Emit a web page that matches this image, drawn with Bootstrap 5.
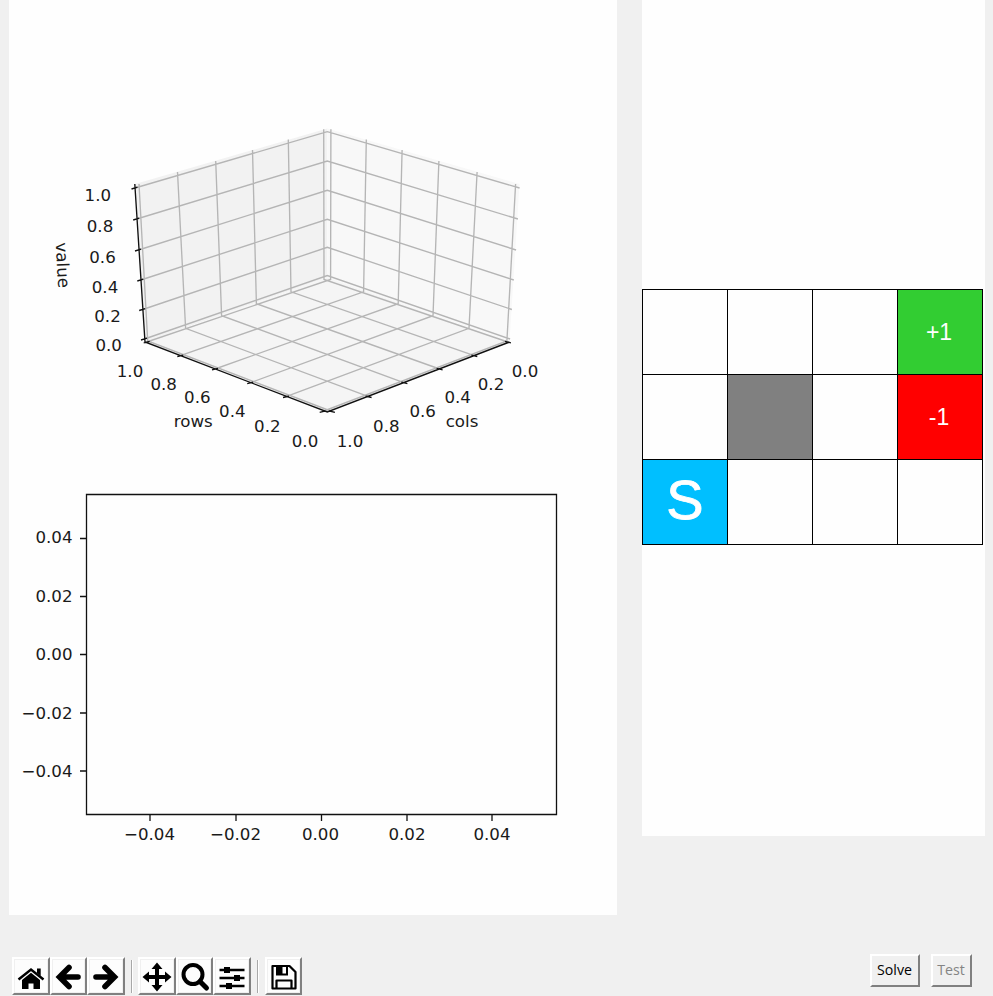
<!DOCTYPE html>
<html lang="en">
<head>
<meta charset="utf-8">
<title>Grid world solver</title>
<link href="https://cdn.jsdelivr.net/npm/bootstrap@5.3.0/dist/css/bootstrap.min.css" rel="stylesheet">
<style>
body{background:#f0f0f0;height:996px;width:993px}
.figure-side{width:608px;margin-left:9px}
.world-side{width:343px;margin-left:25px}
.canvas-plot{height:915px;background:#fefefe}
.canvas-plot text{font:16.67px "DejaVu Sans",sans-serif;fill:#1a1a1a}
.canvas-world{height:836px;background:#fefefe;padding-top:289px}
.world{display:grid;grid-template-columns:repeat(4,84px);grid-auto-rows:84px;gap:1px;padding:1px;width:341px;background:#000}
.world>div{background:#fefefe;color:#fff;font:23px "Liberation Sans",Arial,sans-serif}
.world>.goal{background:#32cd32}.world>.pit{background:#f00}.world>.wall{background:#808080}
.world>.goal,.world>.pit{padding-right:2px}
.world>.start{background:#00bfff;font-size:56px;padding-bottom:5px;-webkit-text-stroke:.8px #fff}
.tools{margin:42px 0 0 3px;height:38px}
.tool{width:37.6px;height:38px;flex:none;background:#fdfdfd;border:2px solid #fff;border-right-color:#808080;border-bottom-color:#808080;border-radius:0;box-shadow:inset 0 0 0 1px #f0f0f0}
.tool svg{flex:none}
.rule{width:2px;height:33px;background:#a8a8a8;border-right:1px solid #fff;margin:0 5.500px 0 6px}
.actions{margin:118px 0 0 228px;gap:11px}
.act{height:33px;border:2px solid #fff;border-right-color:#808080;border-bottom-color:#808080;border-radius:0;background:#f0f0f0;font:14.2px "Open Sans",sans-serif;color:#000;padding:0 1px 2px 0}
.act:disabled{color:#848484;opacity:1;background:#f0f0f0;border-color:#fff #808080 #808080 #fff}
</style>
</head>
<body class="d-flex align-items-start overflow-hidden">
<main class="figure-side flex-shrink-0">
<div class="canvas-plot">
<svg class="d-block" width="608" height="915" viewBox="9 0 608 915">
<path fill="#f2f2f2" d="M135 184 327.3 128.5V277.5L145 342z"/>
<path fill="#f8f8f8" d="M519.5 184 327.3 128.5V277.5L509.5 342z"/>
<path fill="#f5f5f5" d="M327.3 277.5 509.5 342 327.3 412 145 342z"/>
<g id="mesh" fill="none" stroke="#b5b5b5" stroke-width="1.35"></g>
<g id="axes" fill="none" stroke="#111" stroke-width="1.35"></g>
<g id="labels" text-anchor="middle"></g>
<text text-anchor="middle" transform="translate(57 265.500) rotate(87)">value</text>
<g fill="none" stroke="#111" stroke-width="1.3"><path d="M86.500 494.500h470v320h-470z"/><path d="M80 538.500h6M80 596.500h6M80 654.500h6M80 713h6M80 771h6M150 815v6M236 815v6M321.500 815v6M407 815v6M492 815v6"/></g>
<g text-anchor="end"><text x="72.500" y="543.400">0.04</text><text x="72.500" y="602">0.02</text><text x="72.500" y="660.400">0.00</text><text x="72.500" y="719">−0.02</text><text x="72.500" y="777">−0.04</text></g>
<g text-anchor="middle"><text x="149.500" y="840">−0.04</text><text x="235.500" y="840">−0.02</text><text x="320.500" y="840">0.00</text><text x="407" y="840">0.02</text><text x="492" y="840">0.04</text></g>
</svg>
</div>
<div class="tools d-flex align-items-center">
<button class="tool btn p-0 d-flex" aria-label="Home"><svg width="34" height="34" viewBox="0 0 34 34"><path d="M4.500 20.500 17 10.500l12.500 10" fill="none" stroke="#000" stroke-width="2.500"/><path d="M23 9.500h3.700V17L23 14zM8 21l9-7.200 9 7.200v9h-6.500v-5.500h-5V30H8z"/></svg></button>
<button class="tool btn p-0 d-flex" aria-label="Back"><svg width="34" height="34" viewBox="0 0 34 34"><path d="M26 18H9M17 8.500 7.500 18l9.500 9.500" fill="none" stroke="#000" stroke-width="5.600" stroke-linecap="round"/></svg></button>
<button class="tool btn p-0 d-flex" aria-label="Forward"><svg width="34" height="34" viewBox="0 0 34 34"><path d="M7 18h17M16 8.500l9.500 9.500-9.500 9.500" fill="none" stroke="#000" stroke-width="5.600" stroke-linecap="round"/></svg></button>
<span class="rule flex-shrink-0"></span>
<button class="tool btn p-0 d-flex" aria-label="Pan"><svg width="34" height="34" viewBox="0 0 34 34"><path d="M17 7v22M6 18h22" stroke="#000" stroke-width="4"/><path d="m17 3.500 5.500 6.500h-11zM17 32.500l5.500-6.500h-11zM2.500 18 9 12.500v11zM31.500 18 25 12.500v11z"/></svg></button>
<button class="tool btn p-0 d-flex" aria-label="Zoom"><svg width="34" height="34" viewBox="0 0 34 34"><circle cx="15" cy="15.500" r="9.500" fill="none" stroke="#000" stroke-width="4"/><path d="m22 22.500 6.500 6.500" stroke="#000" stroke-width="5" stroke-linecap="round"/></svg></button>
<button class="tool btn p-0 d-flex" aria-label="Subplots"><svg width="34" height="34" viewBox="0 0 34 34"><path d="M4.500 11h25M4.500 19h25M4.500 27h25" stroke="#000" stroke-width="2.400"/><path d="M9 8h6v6H9zM19 16h6v6h-6zM11 24h6v6h-6z"/></svg></button>
<span class="rule flex-shrink-0"></span>
<button class="tool btn p-0 d-flex" aria-label="Save"><svg width="34" height="34" viewBox="0 0 34 34"><path d="M5.500 7h17l6 6v16.500h-23zM9.500 29v-7.500h15V29" fill="none" stroke="#000" stroke-width="2.200" stroke-linejoin="round"/><path d="M9 7h12v9.500H9z"/><path fill="#fff" d="M15.500 8h3.500v6.500h-3.500z"/></svg></button>
</div>
</main>
<aside class="world-side flex-shrink-0">
<div class="canvas-world"><div class="world">
<div></div><div></div><div></div><div class="goal d-flex align-items-center justify-content-center">+1</div>
<div></div><div class="wall"></div><div></div><div class="pit d-flex align-items-center justify-content-center">-1</div>
<div class="start d-flex align-items-center justify-content-center">S</div><div></div><div></div><div></div>
</div></div>
<div class="actions d-flex"><button class="act" style="width:50px">Solve</button><button class="act" style="width:41px" disabled>Test</button></div>
</aside>
<script src="https://cdn.jsdelivr.net/npm/bootstrap@5.3.0/dist/js/bootstrap.bundle.min.js"></script>
<script>
const cx=327.3, mx=x=>2*cx-x;
// left wall verticals: top and bottom of each; right wall is symmetric
const walls=[[323.7,129.3,324,279.5],[288.3,139.5,291,291.8],[252.5,150,256.4,303.7],[215.7,161,221.6,315.7],[177.5,172,185.6,328.3],[139,184,147.7,341]];
// front edge ticks on the rows axis, 0.0 to 1.0
const front=[[322.7,411.5],[286,396.7],[250.2,382.8],[215,369],[180.3,355.7],[146.7,342]];
const levels=[[135,188,131.7],[136.7,219,161],[138.5,250,190.3],[140.8,280,219.3],[142.7,309.5,247.3],[144.5,339,275.5]];
let m='',a='M134.800 184 145 342 327.300 412 509.500 342';
walls.forEach(([x,y,u,v],i)=>{const [p,q]=front[5-i];
 m+=`M${x} ${y}L${u} ${v}L${mx(p)} ${q}M${mx(x)} ${y}L${mx(u)} ${v}L${p} ${q}`;});
levels.forEach(([x,y,c])=>{m+=`M${x} ${y}L${cx} ${c}L${mx(x)} ${y}`;a+=`M${x-3.500} ${y+1}l6-1.800`;});
front.forEach(([x,y])=>{a+=`M${x-3} ${y+.8}l6-1.400M${mx(x)+3} ${y+.8}l-6-1.400`;});
mesh.innerHTML=`<path d="${m}"/>`;axes.innerHTML=`<path d="${a}"/>`;
const t=[['1.0',97.8,201],['0.8',100,232],['0.6',102.500,263],['0.4',105,293.400],['0.2',107.500,322.400],['0.0',108.700,351],
['1.0',130,377],['0.8',163.700,390],['0.6',197.300,403.400],['0.4',232.300,417],['0.2',267.300,432],['0.0',305,447],
['0.0',525,377],['0.2',491,390],['0.4',457.700,403.400],['0.6',422.700,417],['0.8',386.300,432],['1.0',350,447],['rows',193.300,427],['cols',462,427]];
labels.innerHTML=t.map(([s,x,y])=>`<text x="${x}" y="${y}">${s}</text>`).join('');
</script>
</body>
</html>
